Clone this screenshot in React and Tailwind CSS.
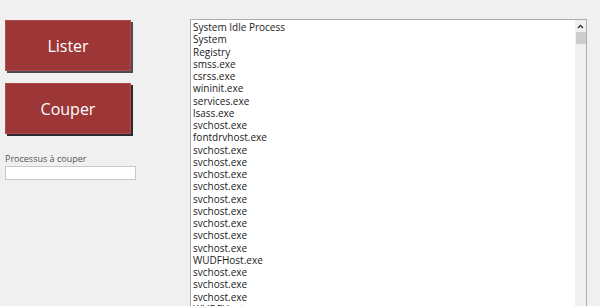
import React from "react";

const items = [
  "System Idle Process","System","Registry","smss.exe","csrss.exe","wininit.exe","services.exe","lsass.exe","svchost.exe","fontdrvhost.exe","svchost.exe","svchost.exe","svchost.exe","svchost.exe","svchost.exe","svchost.exe","svchost.exe","svchost.exe","svchost.exe","WUDFHost.exe","svchost.exe","svchost.exe","svchost.exe","WUDFHost.exe",
];

export default function App() {
  return (
    <div className="w-[600px] h-[306px] bg-[#f0f0f0] overflow-hidden flex" style={{ fontFamily: "'Open Sans', 'Liberation Sans', sans-serif" }}>
      <div className="w-[185px] pl-[5px] pt-[20px] flex flex-col">
        <button className="w-[126px] h-[51px] bg-[#9d3636] border border-[#b04a4a] shadow-[2px_2px_0_#4a4a55] text-white text-[16px] flex items-center justify-center">Lister</button>
        <button className="mt-[12px] w-[126px] h-[51px] bg-[#9d3636] border border-[#b04a4a] shadow-[2px_2px_0_#2a2a35] text-white text-[16px] flex items-center justify-center">Couper</button>
        <div className="mt-[19px] text-[9px] leading-[12px] text-[#555]">Processus à couper</div>
        <div className="mt-[1px] w-[131px] h-[14px] bg-white border border-[#c8c8c8]"></div>
      </div>
      <div className="ml-[5px] mt-[19px] w-[397px] h-[300px] bg-white border border-[#acacac] flex">
        <div className="flex-1 pl-[2px] pt-[1px] text-[10px] leading-[12.25px] text-[#1a1a1a]">
          {items.map((t, i) => (
            <div key={i} className="whitespace-nowrap h-[12.25px]">{t}</div>
          ))}
        </div>
        <div className="w-[11px] bg-[#f0f0f0] flex flex-col items-center">
          <svg width="11" height="11" viewBox="0 0 11 11" className="mt-[1px]">
            <path d="M3 7 L5.5 4.5 L8 7" stroke="#333" strokeWidth="1.3" fill="none" />
          </svg>
          <div className="w-[10px] h-[12px] bg-[#cdcdcd]"></div>
        </div>
      </div>
    </div>
  );
}
